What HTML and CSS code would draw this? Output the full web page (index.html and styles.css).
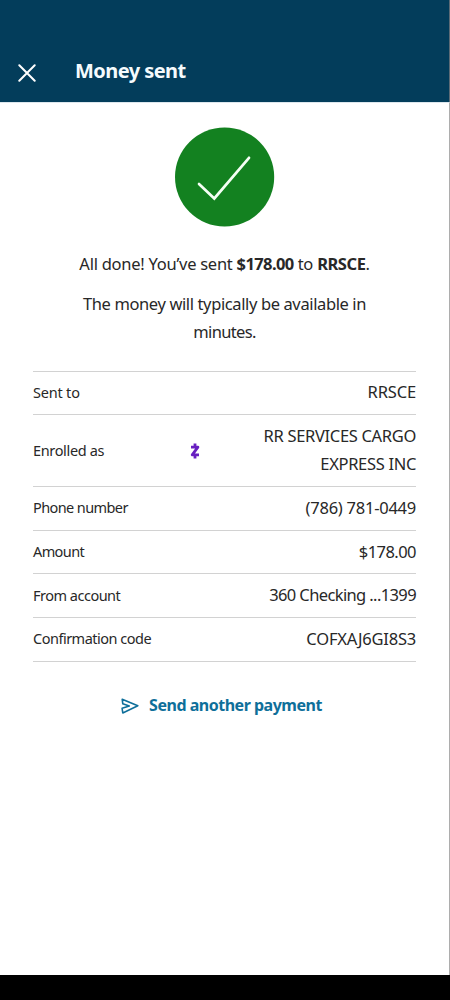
FILE: index.html
```html
<!DOCTYPE html>
<html lang="en">
<head>
<meta charset="utf-8">
<title>Money sent</title>
<link rel="stylesheet" href="styles.css">
</head>
<body>
<div class="screen">
  <header class="header">
    <svg class="close" viewBox="0 0 18 18"><path d="M1.3 1.3 16.7 16.7M16.7 1.3 1.3 16.7"/></svg>
    <h1 class="title">Money sent</h1>
  </header>
  <main class="main">
    <svg class="success" viewBox="0 0 100 100"><circle cx="49.6" cy="50" r="49.6"/><path d="M24 57 39.3 71.5 74 30.8"/></svg>
    <p class="message done">All done! You’ve sent <b class="sum">$178.00</b> to <b>RRSCE</b>.</p>
    <p class="message timing">The money will typically be available in<br><span class="minutes">minutes.</span></p>
    <dl class="details">
      <div class="row"><dt class="l-sent">Sent to</dt><dd class="v-name">RRSCE</dd></div>
      <div class="row"><dt class="l-enrolled">Enrolled as</dt><svg class="zelle" viewBox="0 0 10 16"><path d="M1 4.1H7.9L2.2 11.9H9M5 .4V4M5 12V15.6"/></svg><dd class="v-enrolled">RR SERVICES CARGO<br>EXPRESS INC</dd></div>
      <div class="row"><dt class="l-phone">Phone number</dt><dd class="v-phone">(786) 781-0449</dd></div>
      <div class="row"><dt class="l-phone">Amount</dt><dd class="v-amount">$178.00</dd></div>
      <div class="row"><dt>From account</dt><dd class="v-account">360 Checking ...1399</dd></div>
      <div class="row"><dt>Confirmation code</dt><dd class="v-code">COFXAJ6GI8S3</dd></div>
    </dl>
    <a class="again"><svg class="send" viewBox="0 0 18 16"><path d="M1.2 1.2 16.8 7.8 1.8 15 1.1 10.3 8.3 7.9 1.8 5.8Z"/></svg><span>Send another payment</span></a>
  </main>
  <div class="navbar"></div>
</div>
</body>
</html>
```
FILE: styles.css
```css
* { box-sizing: border-box; }
body { margin: 0; background: #fff; color: #282828; font-family: "Noto Sans", sans-serif; }
.screen { width: 450px; height: 1000px; display: flex; flex-direction: column; overflow: hidden; }
.header { height: 102px; flex: none; background: #033d5b; border-right: 1px solid #5c6b76; display: flex; align-items: flex-start; padding: 64px 0 0 18px; }
.close { width: 18px; height: 18px; fill: none; stroke: #fff; stroke-width: 2; stroke-linecap: round; }
.title { margin: -7px 0 0 39px; color: #f5fbfd; font-size: 20px; line-height: 28px; font-weight: 700; letter-spacing: -.55px; white-space: nowrap; }
.main { flex: 1; border-top: 1px solid #dde7ed; border-right: 1px solid #adadad; display: flex; flex-direction: column; align-items: center; padding: 24px 0 0; }
.success { width: 100px; height: 100px; flex: none; }
.success circle { fill: #138120; }
.success path { fill: none; stroke: #f5fff5; stroke-width: 2.7; stroke-linecap: round; stroke-linejoin: miter; }
.message { margin: 0; font-size: 16.5px; line-height: 28px; text-align: center; white-space: nowrap; }
.done { margin-top: 23px; letter-spacing: -.26px; }
.done b { letter-spacing: -.45px; }
.done .sum { letter-spacing: -.6px; }
.timing { margin-top: 12px; letter-spacing: -.38px; }
.minutes { letter-spacing: -.65px; }
.details { width: 383px; margin: 24.6px 0 0; border-top: 1px solid #d2d2d2; }
.row { display: flex; align-items: center; border-bottom: 1px solid #d2d2d2; padding: 6.9px 0 7.8px; }
.row dt { margin-top: -1px; font-size: 14.5px; line-height: 28px; letter-spacing: -.5px; white-space: nowrap; }
.row dd { margin: 0 0 0 auto; font-size: 16.5px; line-height: 28px; text-align: right; white-space: nowrap; }
.row .l-sent { letter-spacing: -.2px; }
.row .l-enrolled { width: 156.5px; letter-spacing: -.35px; }
.row .l-phone { letter-spacing: -.6px; }
.v-name { letter-spacing: -.15px; }
.v-enrolled { letter-spacing: -.32px; }
.v-phone { letter-spacing: -.25px; }
.v-amount { letter-spacing: -.55px; }
.v-account { letter-spacing: -.62px; }
.v-code { letter-spacing: -.2px; }
.zelle { width: 10px; height: 16px; margin-top: 1px; fill: none; stroke: #6820c0; stroke-width: 2.8; stroke-linejoin: round; }
.again { display: flex; align-items: center; gap: 10px; margin: 29.6px 0 0 -6px; color: #0f6f9a; font-size: 16px; line-height: 28px; font-weight: 700; letter-spacing: -.49px; white-space: nowrap; }
.send { width: 18px; height: 16px; fill: none; stroke: #0f6f9a; stroke-width: 1.6; stroke-linejoin: round; position: relative; top: 1px; }
.navbar { height: 25px; flex: none; background: #000; }
```
